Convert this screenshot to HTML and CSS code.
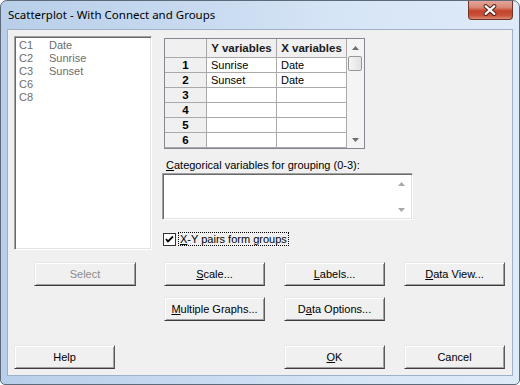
FILE: index.html
```html
<!DOCTYPE html>
<html>
<head>
<meta charset="utf-8">
<link rel="stylesheet" href="styles.css">
</head>
<body>
<div class="window">
  <div class="titlebar">
    <span class="title">Scatterplot - With Connect and Groups</span>
    <div class="close">
      <svg width="45" height="19" viewBox="0 0 45 19">
        <path d="M18 5 L27 13 M27 5 L18 13" stroke="#4a1d14" stroke-width="4.2" stroke-linecap="round" fill="none"/>
        <path d="M18 5 L27 13 M27 5 L18 13" stroke="#ffffff" stroke-width="2.2" stroke-linecap="round" fill="none"/>
      </svg>
    </div>
  </div>
  <div class="client">
    <div class="top">
      <div class="listbox">
        <div class="item"><span class="col">C1</span><span>Date</span></div>
        <div class="item"><span class="col">C2</span><span>Sunrise</span></div>
        <div class="item"><span class="col">C3</span><span>Sunset</span></div>
        <div class="item"><span class="col">C6</span><span></span></div>
        <div class="item"><span class="col">C8</span><span></span></div>
      </div>
      <div class="right">
        <div class="grid">
          <div class="cells">
            <div class="cell hdr"></div><div class="cell hdr b">Y variables</div><div class="cell hdr b">X variables</div>
            <div class="cell rh">1</div><div class="cell">Sunrise</div><div class="cell">Date</div>
            <div class="cell rh">2</div><div class="cell">Sunset</div><div class="cell">Date</div>
            <div class="cell rh">3</div><div class="cell"></div><div class="cell"></div>
            <div class="cell rh">4</div><div class="cell"></div><div class="cell"></div>
            <div class="cell rh">5</div><div class="cell"></div><div class="cell"></div>
            <div class="cell rh">6</div><div class="cell"></div><div class="cell"></div>
          </div>
          <div class="vscroll">
            <div class="arrow"><svg width="7" height="4" viewBox="0 0 7 4"><path d="M0 4 L3.5 0 L7 4 Z" fill="#6d6d6d"/></svg></div>
            <div class="thumb"></div>
            <div class="track"></div>
            <div class="arrow"><svg width="7" height="4" viewBox="0 0 7 4"><path d="M0 0 L3.5 4 L7 0 Z" fill="#6d6d6d"/></svg></div>
          </div>
        </div>
        <div class="label"><u>C</u>ategorical variables for grouping (0-3):</div>
        <div class="textbox">
          <div class="tspace"></div>
          <div class="vscroll light">
            <div class="arrow"><svg width="7" height="4" viewBox="0 0 7 4"><path d="M0 4 L3.5 0 L7 4 Z" fill="#a8a8a8"/></svg></div>
            <div class="track"></div>
            <div class="arrow"><svg width="7" height="4" viewBox="0 0 7 4"><path d="M0 0 L3.5 4 L7 0 Z" fill="#a8a8a8"/></svg></div>
          </div>
        </div>
        <div class="check">
          <span class="box"><svg width="11" height="11" viewBox="0 0 11 11"><path d="M2 5 L4 7.5 L9 2.5" stroke="#000" stroke-width="1.8" fill="none"/></svg></span>
          <span class="focus"><u>X</u>-Y pairs form groups</span>
        </div>
      </div>
    </div>
    <div class="buttons">
      <div class="btn disabled select">Select</div>
      <div class="btn"><u>S</u>cale...</div>
      <div class="btn"><u>L</u>abels...</div>
      <div class="btn"><u>D</u>ata View...</div>
      <div class="spacer"></div>
      <div class="btn"><u>M</u>ultiple Graphs...</div>
      <div class="btn">D<u>a</u>ta Options...</div>
      <div class="spacer"></div>
      <div class="btn help">Help</div>
      <div class="spacer"></div>
      <div class="btn"><u>O</u>K</div>
      <div class="btn">Cancel</div>
    </div>
  </div>
</div>
</body>
</html>
```
FILE: styles.css
```css
html, body {
  margin: 0;
  padding: 0;
}
body {
  width: 520px;
  height: 385px;
  overflow: hidden;
  background: #ffffff;
  font-family: "Liberation Sans", Arial, sans-serif;
  font-size: 11px;
  color: #000;
}
.window {
  box-sizing: border-box;
  width: 520px;
  height: 385px;
  border: 1px solid #5d6a7a;
  border-radius: 7px 7px 5px 5px;
  padding: 0 6px 8px 6px;
  background: linear-gradient(to right, #b9cfe9 0%, #c6d9ef 35%, #d6e5f6 65%, #dfeaf8 100%);
  display: flex;
  flex-direction: column;
}
.titlebar {
  height: 28px;
  display: flex;
  justify-content: space-between;
  align-items: flex-start;
  flex: none;
}
.title {
  padding: 6px 0 0 1px;
  font-family: "Noto Sans", "Open Sans", sans-serif;
  font-size: 11.5px;
  line-height: 16px;
  color: #000;
}
.close {
  width: 45px;
  height: 19px;
  box-sizing: border-box;
  border: 1px solid #6e3428;
  border-top: none;
  border-radius: 0 0 4px 4px;
  background: linear-gradient(to bottom, #e4a497 0%, #d98a78 35%, #c4432c 55%, #c9513a 80%, #dc8a72 100%);
  display: flex;
  align-items: center;
  justify-content: center;
  overflow: hidden;
}
.close svg {
  display: block;
  margin-left: -1px;
}
.client {
  box-sizing: border-box;
  height: 347px;
  border: 1px solid #9fb1c7;
  background: #f0f0f0;
  padding: 6px;
  flex: none;
}
.top {
  display: flex;
  gap: 10px;
}
.listbox {
  box-sizing: border-box;
  width: 138px;
  height: 214px;
  background: #fff;
  border: 1px solid;
  border-color: #a0a0a0 #ffffff #ffffff #a0a0a0;
  box-shadow: inset 1px 1px 0 #696969, inset -1px -1px 0 #e3e3e3;
  padding: 2px 0 0 4px;
  color: #6d6d6d;
}
.item {
  display: flex;
  height: 13px;
  line-height: 13px;
}
.item .col {
  width: 30px;
}
.right {
  width: 251px;
  display: flex;
  flex-direction: column;
  align-items: flex-start;
}
.grid {
  margin: 2px 0 0 2px;
  display: flex;
  border: 1px solid #828790;
  background: #fff;
}
.cells {
  display: grid;
  grid-template-columns: 42px 70px 70px;
  grid-template-rows: 19px repeat(6, 15px);
}
.cell {
  box-sizing: border-box;
  border-right: 1px solid #a9a9a9;
  border-bottom: 1px solid #a9a9a9;
  line-height: 14px;
  padding-left: 4px;
  white-space: nowrap;
  overflow: hidden;
  background: #fff;
}
.cell.hdr {
  background: #f0f0f0;
  line-height: 18px;
  padding-left: 0;
  text-align: center;
}
.cell.b {
  font-weight: bold;
  font-size: 11.5px;
  color: #1a1a1a;
}
.cell.rh {
  background: #f0f0f0;
  font-weight: bold;
  text-align: center;
  padding-left: 0;
  font-size: 11.5px;
}
.vscroll {
  width: 17px;
  display: flex;
  flex-direction: column;
  background: #f4f4f4;
}
.vscroll .arrow {
  height: 17px;
  display: flex;
  align-items: center;
  justify-content: center;
  flex: none;
}
.vscroll .arrow svg {
  display: block;
}
.vscroll .track {
  flex: 1;
}
.vscroll .thumb {
  box-sizing: border-box;
  height: 15px;
  margin: 0 2px 0 1px;
  border: 1px solid #979797;
  border-radius: 2px;
  background: linear-gradient(to right, #f5f5f5, #e2e2e2);
  flex: none;
}
.vscroll.light {
  background: #ffffff;
}
.label {
  margin: 10px 0 0 4px;
  line-height: 13px;
  height: 13px;
}
.textbox {
  box-sizing: border-box;
  margin-top: 1px;
  width: 251px;
  height: 47px;
  background: #fff;
  border: 1px solid;
  border-color: #a0a0a0 #ffffff #ffffff #a0a0a0;
  box-shadow: inset 1px 1px 0 #696969, inset -1px -1px 0 #e3e3e3;
  padding: 1px 2px 1px 1px;
  display: flex;
}
.tspace {
  flex: 1;
}
.check {
  margin: 12px 0 0 1px;
  display: flex;
  align-items: center;
  height: 14px;
}
.box {
  box-sizing: border-box;
  width: 13px;
  height: 13px;
  border: 1px solid #333;
  background: #fff;
  display: flex;
  align-items: center;
  justify-content: center;
}
.box svg {
  display: block;
}
.focus {
  margin-left: 2px;
  border: 1px dotted #000;
  padding: 0 1px;
  line-height: 12px;
}
.buttons {
  margin-top: 12px;
  display: grid;
  grid-template-columns: 131px 101px 101px 101px;
  grid-template-rows: 24px 24px 37px;
  column-gap: 19px;
  row-gap: 11px;
  align-items: end;
}
.btn {
  box-sizing: border-box;
  height: 24px;
  border: 1px solid;
  border-color: #e8e8e8 #5a5a5a #3c3c3c #e8e8e8;
  box-shadow: inset 1px 1px 0 #ffffff, inset -1px -1px 0 #a0a0a0;
  background: #f0f0f0;
  display: flex;
  align-items: center;
  justify-content: center;
  white-space: nowrap;
}
.btn.select {
  width: 102px;
  justify-self: end;
  margin-right: 9px;
}
.btn.disabled {
  color: #8d8d8d;
}
.btn.help {
  width: 101px;
}
```
